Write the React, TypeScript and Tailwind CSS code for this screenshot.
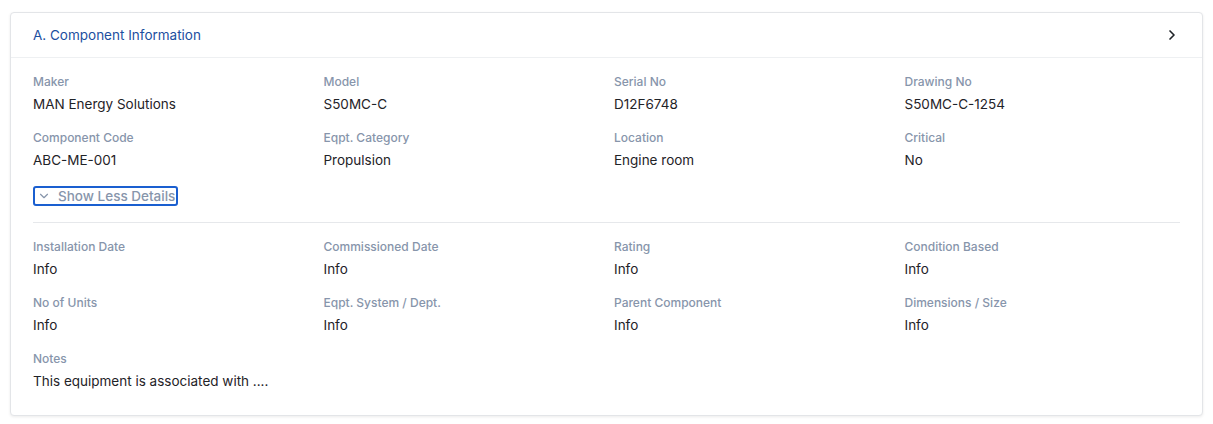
import React, { useState } from "react";
import { ChevronRight, ChevronDown } from "lucide-react";

type Field = { label: string; value: string };

const mainFields: Field[] = [
  { label: "Maker", value: "MAN Energy Solutions" },
  { label: "Model", value: "S50MC-C" },
  { label: "Serial No", value: "D12F6748" },
  { label: "Drawing No", value: "S50MC-C-1254" },
  { label: "Component Code", value: "ABC-ME-001" },
  { label: "Eqpt. Category", value: "Propulsion" },
  { label: "Location", value: "Engine room" },
  { label: "Critical", value: "No" },
];

const extraFields: Field[] = [
  { label: "Installation Date", value: "Info" },
  { label: "Commissioned Date", value: "Info" },
  { label: "Rating", value: "Info" },
  { label: "Condition Based", value: "Info" },
  { label: "No of Units", value: "Info" },
  { label: "Eqpt. System / Dept.", value: "Info" },
  { label: "Parent Component", value: "Info" },
  { label: "Dimensions / Size", value: "Info" },
  { label: "Notes", value: "This equipment is associated with ...." },
];

const InfoItem: React.FC<{ field: Field }> = ({ field }) => (
  <div>
    <p className="text-[12px] leading-[16px] font-medium text-[#8795ab]">
      {field.label}
    </p>
    <p className="mt-[4px] text-[13.5px] leading-[20px] text-[#1f2328] whitespace-nowrap">
      {field.value}
    </p>
  </div>
);

const App: React.FC = () => {
  const [showMore, setShowMore] = useState(true);

  return (
    <div
      className="min-h-screen bg-white pt-[12px] px-[10px]"
      style={{ fontFamily: "Inter, 'Noto Sans', sans-serif" }}
    >
      <div className="bg-white border border-[#e3e5e8] rounded-[4px] shadow-[0_1px_3px_rgba(0,0,0,0.08)]">
        <div className="flex items-center justify-between h-[45px] pl-[22px] pr-[22px] border-b border-[#eef0f2]">
          <h2 className="pt-[1px] text-[13.5px] text-[#1c4f9f]">A. Component Information</h2>
          <ChevronRight className="w-4 h-4 text-[#1f2328]" strokeWidth={2.5} />
        </div>

        <div className="px-[22px] pt-[16px] pb-[24px]">
          <div className="grid grid-cols-4 gap-x-[15px] gap-y-[16px]">
            {mainFields.map((f) => (
              <InfoItem key={f.label} field={f} />
            ))}
          </div>

          <button
            className="mt-[16px] flex items-center h-[20px] pl-[2px] pr-[1px] border-2 border-[#1a5fd0] rounded-[3px] text-[13.5px] font-medium text-[#8795ab]"
            onClick={() => setShowMore(!showMore)}
          >
            <ChevronDown className="w-[14px] h-[14px] text-[#8795ab]" strokeWidth={2} />
            <span className="ml-[7px] leading-[16px]">
              {showMore ? "Show Less Details" : "Show More Details"}
            </span>
          </button>

          {showMore && (
            <>
              <div className="mt-[16px] border-t border-[#e6e8eb]" />
              <div className="mt-[16px] grid grid-cols-4 gap-x-[15px] gap-y-[16px]">
                {extraFields.map((f) => (
                  <InfoItem key={f.label} field={f} />
                ))}
              </div>
            </>
          )}
        </div>
      </div>
    </div>
  );
};

export default App;
